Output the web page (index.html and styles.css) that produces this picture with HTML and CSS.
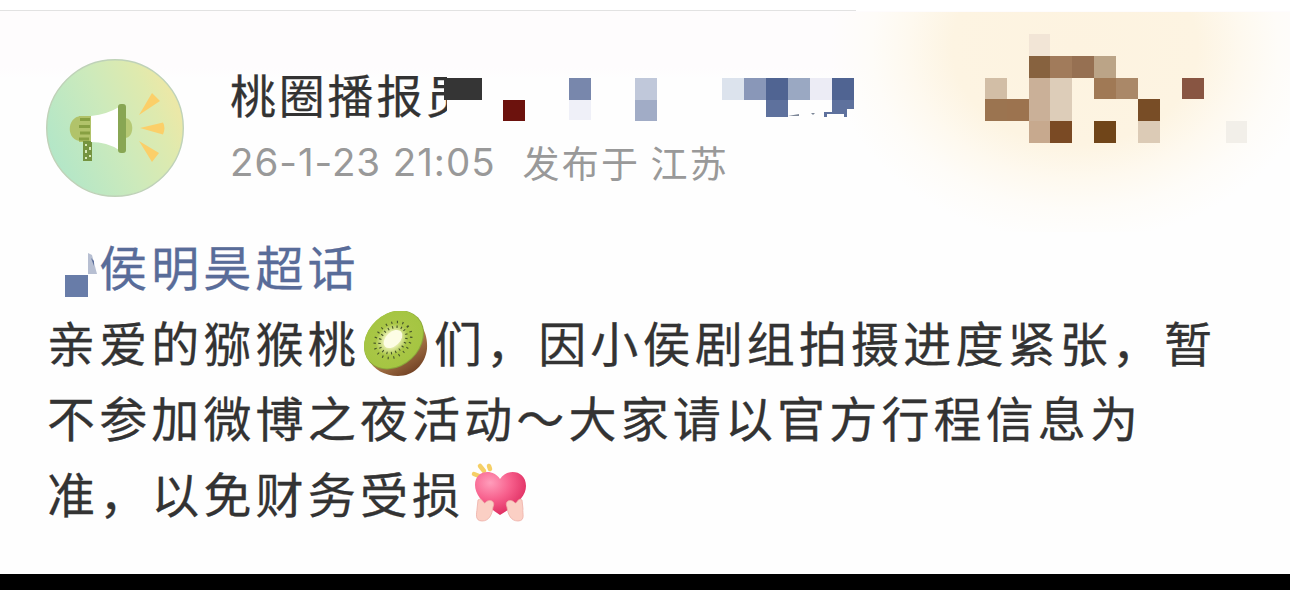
FILE: index.html
```
<!DOCTYPE html>
<html lang="zh-CN">
<head>
  <meta charset="UTF-8" />
  <title>桃圈播报员</title>
  <link rel="stylesheet" href="styles.css">
</head>
<body>

  <div class="post">
    <div class="glow"></div>
    <div class="top-line"></div>

    <div class="header">
      <svg class="avatar" viewBox="0 0 138 138">
        <defs>
          <linearGradient id="sky" x1="0" y1=".75" x2="1" y2=".3">
            <stop offset="0" stop-color="#b0e6c9"/>
            <stop offset=".5" stop-color="#cdeabb"/>
            <stop offset=".8" stop-color="#dfeaae"/>
            <stop offset="1" stop-color="#f0e7a5"/>
          </linearGradient>
        </defs>
        <circle cx="69" cy="69" r="68.3" fill="url(#sky)" stroke="#bfd2b8" stroke-width="1.4"/>
        <path d="M35 57C20 58 20 82 35 82Z" fill="#b1c36a"/>
        <path d="M33 57h12v26H33z" fill="#b1c36a"/>
        <path d="M34 60.500h10M33 67.500h11M34 74h10M33 80h10" stroke="#87a042" stroke-width="3"/>
        <path d="M37 82h9v20h-9z" fill="#759440"/>
        <path d="M39 85h2v2h-2zM43 88h2v3h-2zM39 91h2v3h-2zM43 96h2v2h-2zM39 98h2v2h-2z" fill="#d9e9b9"/>
        <path d="M45 57Q62 55 73 48V91Q61 83 45 83Z" fill="#fff"/>
        <path d="M78 59C89 58 89 80 78 79Z" fill="#b6c974"/>
        <rect x="72" y="45" width="8" height="49" rx="3" fill="#88a653"/>
        <g fill="#fbcf69">
          <path d="M93 56L106 34L114 42Z"/>
          <path d="M94 69L117 63.500Q120 69 117 75.500Z"/>
          <path d="M93 82L113 94L106 103Z"/>
        </g>
      </svg>
      <div class="info">
        <div class="name">桃圈播报员</div>
        <div class="meta"><span class="time">26-1-23 21:05</span><span class="place">发布于 江苏</span></div>
      </div>
    </div>

    <div class="content">
      <div class="topic">侯明昊超话</div>
      <div class="line">亲爱的猕猴桃<svg class="kiwi" viewBox="0 0 66 66">
          <defs>
            <linearGradient id="skin" x1=".5" y1=".5" x2=".8" y2="1">
              <stop offset="0" stop-color="#b58351"/>
              <stop offset="1" stop-color="#6b3b20"/>
            </linearGradient>
            <radialGradient id="flesh" cx=".48" cy=".48" r=".55">
              <stop offset="0" stop-color="#fffef0"/>
              <stop offset=".22" stop-color="#f0f4bd"/>
              <stop offset=".5" stop-color="#a9c646"/>
              <stop offset="1" stop-color="#a4c541"/>
            </radialGradient>
          </defs>
          <path d="M42 3C58 8 65 22 64 38C62 54 50 65 35 65C22 65 10 58 6 49Z" fill="url(#skin)"/>
          <ellipse cx="31" cy="29" rx="33" ry="26" transform="rotate(-43 31 29)" fill="#8aa63a"/>
          <ellipse cx="30.500" cy="28.500" rx="32.300" ry="25.700" transform="rotate(-43 30.500 28.500)" fill="url(#flesh)"/>
          <g transform="rotate(-43 30 29)" fill="none" stroke="#46552a">
            <ellipse cx="30" cy="29" rx="15" ry="11.500" stroke-width="2.500" stroke-dasharray="1.100 3.300"/>
            <ellipse cx="30" cy="29" rx="20" ry="16" stroke-width="2.500" stroke-dasharray="1.100 4.500"/>
          </g>
          <ellipse cx="30" cy="28" rx="11" ry="7" transform="rotate(-43 30 28)" fill="#fdfde5"/>
        </svg>们，因小侯剧组拍摄进度紧张，暂</div>
      <div class="line">不参加微博之夜活动～大家请以官方行程信息为</div>
      <div class="line">准，以免财务受损<svg class="heart" viewBox="0 0 58 62">
          <defs>
            <radialGradient id="love" cx=".3" cy=".25" r=".8">
              <stop offset="0" stop-color="#ff9dbb"/>
              <stop offset=".5" stop-color="#f75f8c"/>
              <stop offset="1" stop-color="#dd2a5e"/>
            </radialGradient>
          </defs>
          <g stroke="#f5cf66" stroke-width="4.500" stroke-linecap="round">
            <path d="M3 12L8 14M9 4L13 9M18 4L19 7"/>
          </g>
          <path d="M29 53C14 43 4 34 4 23C4 8 22 6 29 17C36 6 55 8 55 24C55 35 44 44 29 53Z" fill="url(#love)"/>
          <g fill="#fbcfc4" stroke="#eeb0a8" stroke-width=".8">
            <path d="M7 38C11 35 12 42 14 41C18 36 25 39 22 45C21 53 18 59 11 59C3 59 6 50 6 47Z"/>
            <path d="M51 38C47 35 46 42 44 41C40 36 33 39 36 45C37 53 40 59 47 59C55 59 51 50 52 47Z"/>
          </g>
        </svg></div>
    </div>

    <!-- mosaic over the name badges, the card art and the topic icon -->
    <svg class="mosaic" viewBox="0 0 1290 300" shape-rendering="crispEdges">
      <path d="M447 70h35v52h-35z" fill="#fefefe"/>
      <path d="M444 78h38v22h-38z" fill="#353535"/>
      <path d="M503 100h22v21h-22z" fill="#6c120d"/>
      <path d="M569 78h22v22h-22z" fill="#7887ac"/>
      <path d="M569 100h22v20h-22z" fill="#eff0f8"/>
      <path d="M635 78h22v22h-22z" fill="#c0c8da"/>
      <path d="M635 100h22v21h-22z" fill="#a1acc6"/>
      <path d="M722 78h22v22h-22z" fill="#dce3ed"/>
      <path d="M744 78h22v22h-22z" fill="#8997b8"/>
      <path d="M766 78h22v22h-22z" fill="#506492"/>
      <path d="M766 100h22v17h-22z" fill="#5e719d"/>
      <path d="M788 78h22v22h-22z" fill="#9aa8c2"/>
      <path d="M810 78h22v22h-22z" fill="#ececf5"/>
      <path d="M832 78h22v22h-22z" fill="#506492"/>
      <path d="M832 100h22v9h-7v8h-3v-3h-17v3h-3v-5h8z" fill="#5e719d"/>
      <path d="M788 116l11-2v2zM811 113h4l-2 2z" fill="#7d8798" shape-rendering="auto"/>

      <path d="M1029 34h21v22h-21z" fill="#f2e5d6"/>
      <path d="M1029 56h21v22h-21z" fill="#87623f"/>
      <path d="M1050 56h22v22h-22z" fill="#a17b5b"/>
      <path d="M1072 56h22v22h-22z" fill="#967052"/>
      <path d="M1094 56h22v22h-22z" fill="#bba487"/>
      <path d="M985 78h22v21h-22z" fill="#d2bea6"/>
      <path d="M1029 78h21v43h-21z" fill="#cab098"/>
      <path d="M1050 78h22v43h-22z" fill="#ddcdb9"/>
      <path d="M1094 78h22v21h-22z" fill="#a07955"/>
      <path d="M1116 78h22v21h-22z" fill="#aa8868"/>
      <path d="M1182 78h22v21h-22z" fill="#885542"/>
      <path d="M985 99h22v22h-22z" fill="#9b7450"/>
      <path d="M1007 99h22v22h-22z" fill="#9c734f"/>
      <path d="M1138 99h22v22h-22z" fill="#784d26"/>
      <path d="M1029 121h21v22h-21z" fill="#c7a98e"/>
      <path d="M1050 121h22v22h-22z" fill="#7a4a24"/>
      <path d="M1094 121h22v22h-22z" fill="#704519"/>
      <path d="M1138 121h22v22h-22z" fill="#dccbb6"/>
      <path d="M1226 121h21v22h-21z" fill="#f2efe9"/>

      <path d="M65 275h23v22H65z" fill="#687ca8"/>
      <path d="M88 253l4 2 5 19h-9z" fill="#b7bfd2" shape-rendering="auto"/>
      <path d="M91 258l3 3v5z" fill="#5e719d" shape-rendering="auto"/>
    </svg>
  </div>

</body>
</html>
```
FILE: styles.css
```
body, html {
  margin: 0;
  padding: 0;
  height: 100%;
  overflow: hidden;
  background: #000;
  font-family: "Noto Sans CJK SC", sans-serif;
}

.post {
  position: relative;
  height: 574px;
  overflow: hidden;
  background: linear-gradient(#fff 11px, #fefcfd 11px, #fefcfd 68px, #fefefe 78px);
  color: #333;
}

/* warm card glow behind the top right corner */
.glow {
  position: absolute;
  top: 12px;
  right: 0;
  width: 490px;
  height: 220px;
  background: radial-gradient(ellipse 245px 195px at 275px 35px, #fdf3e0 0%, #fdf4e2 50%, #fef9ef 68%, #fefcf8 83%, rgba(254, 254, 254, 0) 100%);
}

.top-line {
  width: 856px;
  height: 1px;
  margin-top: 10px;
  background: #e2e2e2;
}

/* Header */
.header {
  position: relative;
  display: flex;
  gap: 46px;
  height: 217px;
  padding: 48px 0 0 46px;
  box-sizing: border-box;
}
.avatar {
  width: 138px;
  height: 138px;
}
.name {
  height: 68px;
  font-size: 46px;
  line-height: 68px;
  letter-spacing: 2.800px;
  white-space: nowrap;
  -webkit-text-stroke: .25px #333;
}
.meta {
  display: flex;
  gap: 27px;
  color: #999;
  line-height: 70px;
  white-space: nowrap;
}
.time {
  font-family: Inter, sans-serif;
  font-size: 38.500px;
  letter-spacing: .950px;
}
.place {
  font-size: 37px;
  letter-spacing: 2.200px;
}

/* Post text */
.content {
  padding-left: 47px;
  font-size: 48px;
  line-height: 75.600px;
  letter-spacing: 4.150px;
  white-space: nowrap;
  -webkit-text-stroke: .3px #333;
}
.topic {
  padding-left: 52px;
  color: #596c99;
  -webkit-text-stroke: .3px #596c99;
}
.kiwi {
  width: 66px;
  height: 66px;
  margin: 0 5px 0 3px;
  vertical-align: -15px;
}
.heart {
  width: 58px;
  height: 62px;
  margin-left: 7px;
  vertical-align: -11px;
}

.mosaic {
  position: absolute;
  top: 0;
  left: 0;
  width: 1290px;
  height: 300px;
}
```
